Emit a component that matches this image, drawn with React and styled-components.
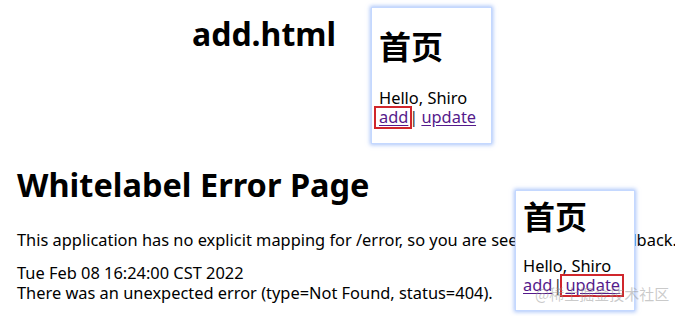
import React from "react";
import styled, { createGlobalStyle } from "styled-components";

const GlobalStyle = createGlobalStyle`
  html, body {
    margin: 0;
    padding: 0;
    background: #ffffff;
  }
  body {
    width: 675px;
    height: 316px;
    overflow: hidden;
    font-family: "Noto Sans", "Noto Sans CJK SC", sans-serif;
    color: #000000;
  }
`;

const Page = styled.div`
  position: relative;
  width: 675px;
  height: 316px;
  overflow: hidden;
`;

const TopSection = styled.section`
  height: 150px;
  padding-left: 192px;
  padding-top: 14px;
  box-sizing: border-box;
`;

const PageTitle = styled.h1`
  margin: 0;
  font-size: 32px;
  font-weight: 700;
  line-height: 40px;
`;

const ErrorSection = styled.section`
  padding-left: 17px;
  padding-top: 13px;
`;

const ErrorTitle = styled.h1`
  margin: 0 0 23px;
  font-size: 32.5px;
  font-weight: 700;
  line-height: 44px;
  white-space: nowrap;
`;

const Para = styled.p`
  margin: 0 0 ${({ $gap }) => $gap || 0}px;
  font-size: 16.4px;
  line-height: 20px;
  white-space: nowrap;
`;

const Card = styled.div`
  position: absolute;
  left: ${({ $x }) => $x}px;
  top: ${({ $y }) => $y}px;
  width: ${({ $w }) => $w}px;
  height: ${({ $h }) => $h}px;
  box-sizing: border-box;
  padding: ${({ $pt }) => $pt}px 0 0 7px;
  background: #ffffff;
  border: 1px solid #c4d8ff;
  box-shadow: 0 0 4px 1px rgba(110, 155, 245, 0.6);
  display: flex;
  flex-direction: column;
`;

const CardTitle = styled.h1`
  margin: 0 0 ${({ $gap }) => $gap}px;
  font-family: "Noto Sans CJK SC", sans-serif;
  font-size: 32px;
  font-weight: 700;
  line-height: 40px;
`;

const Hello = styled.div`
  font-size: 16.4px;
  line-height: 18px;
`;

const Links = styled.div`
  font-size: 16.4px;
  line-height: 20px;
  display: flex;
  align-items: center;
  white-space: nowrap;
`;

const Link = styled.a`
  position: relative;
  color: #551a8b;
  text-decoration: underline;
  text-underline-offset: 2px;
  &::after {
    content: "";
    display: ${({ $marked }) => ($marked ? "block" : "none")};
    position: absolute;
    left: -5px;
    right: -4px;
    top: -1px;
    bottom: -2px;
    border: 2px solid #d0262c;
  }
`;

const Sep = styled.span`
  margin: 0 3px 0 1px;
  color: #333333;
`;

const Watermark = styled.div`
  position: absolute;
  left: 535px;
  top: 283px;
  font-family: "Noto Sans CJK SC", sans-serif;
  font-size: 15px;
  color: rgba(150, 150, 150, 0.5);
  white-space: nowrap;
`;

const HomeCard = ({ x, y, w, h, pt, gap, marked }) => (
  <Card $x={x} $y={y} $w={w} $h={h} $pt={pt}>
    <CardTitle $gap={gap}>首页</CardTitle>
    <Hello>Hello, Shiro</Hello>
    <Links>
      <Link href="#" $marked={marked === "add"}>add</Link>
      <Sep>|</Sep>
      <Link href="#" $marked={marked === "update"}>update</Link>
    </Links>
  </Card>
);

export default function App() {
  return (
    <>
      <GlobalStyle />
      <Page>
        <TopSection>
          <PageTitle>add.html</PageTitle>
        </TopSection>
        <ErrorSection>
          <ErrorTitle>Whitelabel Error Page</ErrorTitle>
          <Para $gap={13}>
            This application has no explicit mapping for /error, so you are seeing this as a fallback.
          </Para>
          <Para>Tue Feb 08 16:24:00 CST 2022</Para>
          <Para>There was an unexpected error (type=Not Found, status=404).</Para>
        </ErrorSection>
        <HomeCard x={371} y={7} w={121} h={137} pt={17} gap={24} marked="add" />
        <HomeCard x={515} y={190} w={120} h={121} pt={4} gap={22} marked="update" />
        <Watermark>@稀土掘金技术社区</Watermark>
      </Page>
    </>
  );
}
